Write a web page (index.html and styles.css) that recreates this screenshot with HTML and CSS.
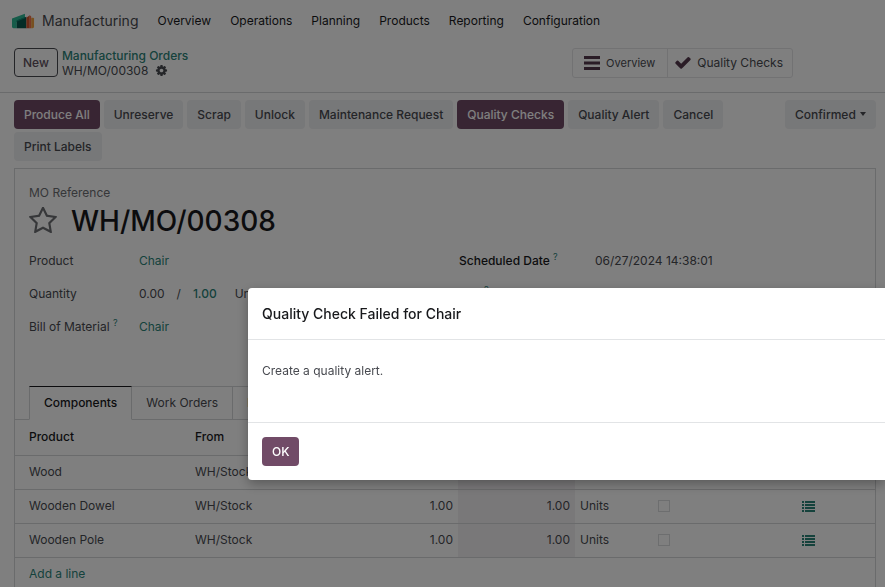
FILE: index.html
```html
<!DOCTYPE html>
<html lang="en">
<head>
<meta charset="utf-8">
<title>WH/MO/00308 - Manufacturing</title>
<link rel="stylesheet" href="styles.css">
</head>
<body>
<header class="navbar">
  <a class="brand" href="#">
    <svg class="brand-icon" viewBox="0 0 24 16" aria-hidden="true">
      <path d="M0 5.500L13.500 0.500V6L5 9V15.500H1.500Q0 15.500 0 14z" fill="#2cb894"/>
      <path d="M5 7.500L15 3.500V15.500H5z" fill="#08594f"/>
      <path d="M5 7.500L13.500 4V5L5 8.500z" fill="#149078"/>
      <path d="M15 4.500L18.500 2V15.500H15z" fill="#d4552c"/>
      <path d="M18.500 2L20 3V15.500H18.500z" fill="#f0704a"/>
      <path d="M20 4.500H22Q23 4.500 23 5.500V14Q23 15.500 21.500 15.500H20z" fill="#f0a040"/>
    </svg>
    <span>Manufacturing</span>
  </a>
  <nav class="menu">
    <a href="#">Overview</a>
    <a href="#">Operations</a>
    <a href="#">Planning</a>
    <a href="#">Products</a>
    <a href="#">Reporting</a>
    <a href="#">Configuration</a>
  </nav>
</header>

<section class="control-panel">
  <button class="btn btn-outline" type="button">New</button>
  <div class="breadcrumb">
    <a href="#">Manufacturing Orders</a>
    <div class="current">
      <span>WH/MO/00308</span>
      <svg class="cog" viewBox="0 0 1792 1792" aria-hidden="true"><path fill="currentColor" d="M1152 896q0-106-75-181t-181-75-181 75-75 181 75 181 181 75 181-75 75-181zm512-109v222q0 12-8 23t-20 13l-185 28q-19 54-39 91 35 50 107 138 10 12 10 25t-9 23q-27 37-99 108t-94 71q-12 0-26-9l-138-108q-44 23-91 38-16 136-29 186-7 28-36 28h-222q-14 0-24.500-8.500t-11.500-21.500l-28-184q-49-16-90-37l-141 107q-10 9-25 9-14 0-25-11-126-114-165-168-7-10-7-23 0-12 8-23 15-21 51-66.500t54-70.500q-27-50-41-99l-183-27q-13-2-21-12.500t-8-23.500v-222q0-12 8-23t19-13l186-28q14-46 39-92-40-57-107-138-10-12-10-24 0-10 9-23 26-36 98.500-107.500t94.500-71.500q13 0 26 10l138 107q44-23 91-38 16-136 29-186 7-28 36-28h222q14 0 24.500 8.500t11.500 21.500l28 184q49 16 90 37l142-107q9-9 24-9 13 0 25 10 129 119 165 170 7 8 7 22 0 12-8 23-15 21-51 66.500t-54 70.500q26 50 41 98l183 28q13 2 21 12.500t8 23.500z"/></svg>
    </div>
  </div>
  <div class="stat-buttons">
    <button class="stat stat-small" type="button">
      <svg class="stat-icon" viewBox="0 0 16 16" aria-hidden="true"><path fill="currentColor" d="M0 1h16v3H0zM0 6.500h16v3H0zM0 12h16v3H0z"/></svg>
      Overview
    </button>
    <button class="stat" type="button">
      <svg class="stat-icon" viewBox="100 240 1600 1400" aria-hidden="true"><path fill="currentColor" d="M1671 566q0 40-28 68l-724 724-136 136q-28 28-68 28t-68-28l-136-136-362-362q-28-28-28-68t28-68l136-136q28-28 68-28t68 28l294 295 656-657q28-28 68-28t68 28l136 136q28 28 28 68z"/></svg>
      Quality Checks
    </button>
  </div>
</section>

<main>
  <div class="statusbar">
    <div class="actions">
      <button class="btn btn-primary" type="button">Produce All</button>
      <button class="btn" type="button">Unreserve</button>
      <button class="btn" type="button">Scrap</button>
      <button class="btn" type="button">Unlock</button>
      <button class="btn" type="button">Maintenance Request</button>
      <button class="btn btn-primary" type="button">Quality Checks</button>
      <button class="btn" type="button">Quality Alert</button>
      <button class="btn" type="button">Cancel</button>
      <button class="btn" type="button">Print Labels</button>
    </div>
    <button class="btn state" type="button">Confirmed <span class="caret"></span></button>
  </div>

  <article class="sheet">
    <div class="title-block">
      <div class="label">MO Reference</div>
      <div class="title">
        <svg class="star" viewBox="64 100 1664 1600" aria-hidden="true"><path fill="currentColor" d="M1201 1004l306-297-422-62-189-382-189 382-422 62 306 297-73 421 378-199 377 199zm527-357q0 22-26 48l-363 354 86 500q1 7 1 20 0 50-41 50-19 0-40-12l-449-236-449 236q-22 12-40 12-21 0-31.500-14.500t-10.500-35.500q0-6 2-20l86-500-364-354q-25-27-25-48 0-37 56-46l502-73 225-455q19-41 49-41t49 41l225 455 502 73q56 9 56 46z"/></svg>
        <h1>WH/MO/00308</h1>
      </div>
    </div>

    <div class="groups">
      <dl class="group">
        <dt>Product</dt>
        <dd><a href="#">Chair</a></dd>
        <dt>Quantity</dt>
        <dd class="quantity"><span>0.00</span><span>/</span><a class="strong" href="#">1.00</a><span class="unit">Units</span></dd>
        <dt>Bill of Material <sup>?</sup></dt>
        <dd><a href="#">Chair</a></dd>
      </dl>
      <dl class="group group-dates">
        <dt>Scheduled Date <sup>?</sup></dt>
        <dd>06/27/2024 14:38:01</dd>
        <dt>End <sup>?</sup></dt>
        <dd></dd>
      </dl>
    </div>

    <div class="tabs">
      <button class="tab active" type="button">Components</button>
      <button class="tab" type="button">Work Orders</button>
      <button class="tab" type="button">Miscellaneous</button>
    </div>

    <table class="lines">
      <colgroup>
        <col class="c-product"><col><col class="c-qty"><col class="c-done"><col class="c-unit"><col class="c-check"><col class="c-detail">
      </colgroup>
      <thead>
        <tr><th>Product</th><th>From</th><th></th><th></th><th></th><th></th><th></th></tr>
      </thead>
      <tbody>
        <tr>
          <td>Wood</td><td>WH/Stock</td><td class="num">1.00</td><td class="num done">1.00</td><td>Units</td>
          <td><input type="checkbox" aria-label="Consumed: Wood"></td><td></td>
        </tr>
        <tr>
          <td>Wooden Dowel</td><td>WH/Stock</td><td class="num">1.00</td><td class="num done">1.00</td><td>Units</td>
          <td><input type="checkbox" aria-label="Consumed: Wooden Dowel"></td>
          <td><svg class="list" viewBox="0 0 13 11" aria-hidden="true"><path fill="currentColor" d="M0 0h2v2H0zM3 0h10v2H3zM0 3h2v2H0zM3 3h10v2H3zM0 6h2v2H0zM3 6h10v2H3zM0 9h2v2H0zM3 9h10v2H3z"/></svg></td>
        </tr>
        <tr>
          <td>Wooden Pole</td><td>WH/Stock</td><td class="num">1.00</td><td class="num done">1.00</td><td>Units</td>
          <td><input type="checkbox" aria-label="Consumed: Wooden Pole"></td>
          <td><svg class="list" viewBox="0 0 13 11" aria-hidden="true"><path fill="currentColor" d="M0 0h2v2H0zM3 0h10v2H3zM0 3h2v2H0zM3 3h10v2H3zM0 6h2v2H0zM3 6h10v2H3zM0 9h2v2H0zM3 9h10v2H3z"/></svg></td>
        </tr>
        <tr><td colspan="7"><a href="#">Add a line</a></td></tr>
      </tbody>
    </table>
  </article>
</main>

<div class="backdrop"></div>
<section class="dialog" role="dialog" aria-labelledby="dialog-title">
  <header><h2 id="dialog-title">Quality Check Failed for Chair</h2></header>
  <p>Create a quality alert.</p>
  <footer><button class="btn btn-primary btn-ok" type="button">OK</button></footer>
</section>
</body>
</html>
```

FILE: styles.css
```css
:root {
  --text: #484a50;
  --heading: #18191c;
  --muted: #6c6e72;
  --teal: #2b8479;
  --plum: #714b67;
  --line: #d4d6d8;
}

* { box-sizing: border-box; }

body {
  margin: 0;
  height: 100vh;
  overflow: hidden;
  background: #fff;
  color: var(--text);
  font: 12px/20px Inter, "Liberation Sans", sans-serif;
}

a { color: var(--teal); text-decoration: none; }
button { font: inherit; color: inherit; }
h1, h2, p, dl, dd { margin: 0; }

.navbar {
  display: flex;
  align-items: center;
  gap: 19px;
  height: 42px;
  padding: 0 12px;
}
.brand {
  display: flex;
  align-items: center;
  gap: 7px;
  color: var(--text);
  font-size: 14px;
}
.brand-icon { width: 23px; height: 16px; }
.menu { display: flex; gap: 19px; }
.menu a { color: var(--heading); }

.control-panel {
  display: flex;
  align-items: center;
  gap: 4px;
  height: 51px;
  padding: 0 92px 9px 14px;
  border-bottom: 1px solid var(--line);
}
.breadcrumb { line-height: 15px; }
.breadcrumb a { font-weight: 500; }
.current { display: flex; align-items: center; gap: 7px; }
.cog { width: 13px; height: 13px; }

.stat-buttons {
  display: flex;
  margin-left: auto;
  border: 1px solid #e4e5e7;
  border-radius: 3px;
}
.stat {
  display: flex;
  align-items: center;
  gap: 6px;
  height: 28px;
  padding: 0 9px 0 7px;
  border: 0;
  background: none;
}
.stat-small {
  padding: 0 12px 0 11px;
  border-right: 1px solid #e4e5e7;
  font-size: 11px;
}
.stat-icon { width: 16px; height: 16px; color: #55394d; }

.btn {
  height: 29px;
  padding: 0 10px;
  border: 0;
  border-radius: 4px;
  background: #eff0f2;
  color: var(--text);
  font-weight: 500;
  white-space: nowrap;
}
.btn-primary { background: var(--plum); color: #fff; }
.btn-outline {
  padding: 0 8px;
  border: 1px solid var(--text);
  background: none;
  color: #60505e;
}

.statusbar {
  display: flex;
  align-items: flex-start;
  gap: 4px;
  padding: 7px 9px 7px 14px;
}
.actions { display: flex; flex: 1; flex-wrap: wrap; gap: 3px 4px; }
.caret {
  display: inline-block;
  margin-left: 1px;
  border: 3px solid transparent;
  border-top: 4px solid currentColor;
  border-bottom: 0;
  vertical-align: 3px;
}

.sheet {
  margin: 0 9px 0 14px;
  min-height: 440px;
  border: 1px solid var(--line);
}
.title-block { padding: 14px 14px 0; }
.label { color: var(--muted); }
.title { display: flex; align-items: center; gap: 14px; height: 36px; }
.title h1 {
  color: var(--heading);
  font-size: 28px;
  font-weight: 500;
  line-height: 36px;
}
.star { width: 28px; height: 28px; color: var(--muted); }

.groups {
  display: grid;
  grid-template-columns: 1fr 1fr;
  gap: 28px;
  padding: 12px 14px 49px;
}
.group {
  display: grid;
  grid-template-columns: 110px 1fr;
  align-content: start;
  row-gap: 13px;
}
.group-dates { grid-template-columns: 136px 1fr; }
.group dt { height: 20px; color: var(--text); white-space: nowrap; }
.group-dates dt { color: var(--heading); font-weight: 500; }
.group sup { font-size: 9px; line-height: 0; font-weight: 400; color: var(--teal); }
.quantity { display: flex; gap: 12px; }
.quantity .unit { margin-left: 6px; }
.strong { font-weight: 500; }

.tabs {
  display: flex;
  padding: 0 14px;
  box-shadow: inset 0 -1px var(--line);
}
.tab {
  height: 34px;
  padding: 0 14px;
  border: 1px solid var(--line);
  border-left: 0;
  background: none;
}
.tab.active {
  border-left: 1px solid var(--line);
  border-top-color: var(--heading);
  border-bottom-color: #fff;
  background: #fff;
  color: var(--heading);
  font-weight: 500;
}

.lines { width: 100%; border-collapse: collapse; table-layout: fixed; }
.c-product { width: 175px; }
.c-qty { width: 110px; }
.c-done { width: 117px; }
.c-unit { width: 78px; }
.c-check { width: 144px; }
.c-detail { width: 78px; }
.lines th, .lines td {
  height: 34px;
  padding: 0 5px;
  border-bottom: 1px solid var(--line);
  text-align: left;
  white-space: nowrap;
}
.lines th { height: 35px; color: var(--heading); font-weight: 500; }
.lines th:first-child, .lines td:first-child { padding-left: 14px; }
.lines .num { text-align: right; }
.lines .done { background: #f3f0f3; }
.lines input {
  display: block;
  appearance: none;
  width: 12px;
  height: 12px;
  margin: 0;
  border: 1px solid #dadcde;
}
.list { display: block; width: 13px; height: 11px; color: var(--teal); }

.backdrop { position: fixed; inset: 0; background: rgba(0, 0, 0, .5); }

.dialog {
  position: fixed;
  top: 288px;
  left: 248px;
  right: 0;
  border-radius: 4px 0 0 4px;
  background: #fff;
  box-shadow: 0 4px 12px rgba(0, 0, 0, .3);
}
.dialog header { padding: 16px 14px 15px; border-bottom: 1px solid #e2e4e6; }
.dialog h2 { color: var(--heading); font-size: 14px; font-weight: 500; line-height: 20px; }
.dialog p { padding: 21px 14px 41px; }
.dialog footer { padding: 14px; border-top: 1px solid #e2e4e6; }
.btn-ok { display: block; }
```
